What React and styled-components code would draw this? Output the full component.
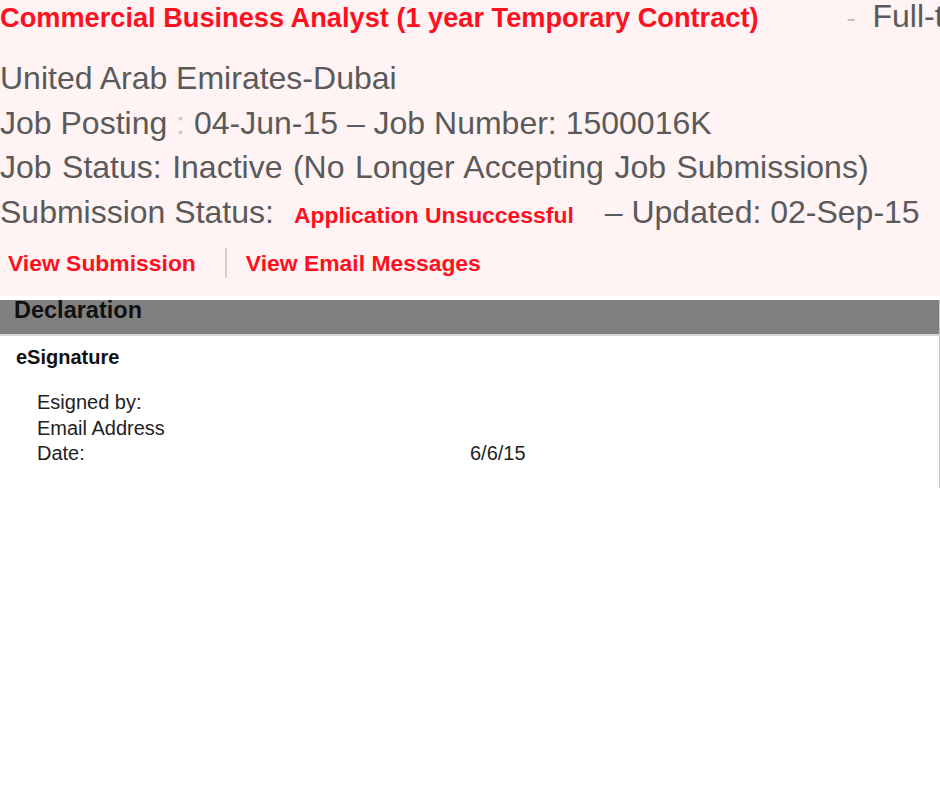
import React from "react";
import styled, { createGlobalStyle } from "styled-components";

const Global = createGlobalStyle`
  html, body { margin: 0; padding: 0; background: #fff; }
  body { font-family: "Liberation Sans", Arial, sans-serif; overflow-x: hidden; }
`;

const RED = "#ff1020";
const GRAY = "#5a5a5a";

const Header = styled.section`
  background: #fff3f4;
  padding: 0 0 18px 0;
  overflow: hidden;
`;

const TitleRow = styled.div`
  display: flex;
  align-items: baseline;
  white-space: nowrap;
  & > * { flex-shrink: 0; line-height: 1; }
`;

const Title = styled.span`
  color: ${RED};
  font-weight: 700;
  font-size: 27.2px;
`;

const Dash = styled.span`
  color: #c2c2c2;
  font-size: 27px;
  margin-left: 88px;
`;

const JobType = styled.span`
  color: ${GRAY};
  font-size: 32px;
  margin-left: 17px;
`;

const InfoList = styled.div`
  margin-top: 24px;
`;

const InfoLine = styled.div`
  color: ${GRAY};
  font-size: 32px;
  line-height: 44.6px;
  white-space: nowrap;
  word-spacing: ${(p) => p.$wordSpacing || "0px"};
`;

const Muted = styled.span`
  color: #c8c8c8;
`;

const Status = styled.span`
  color: ${RED};
  font-weight: 700;
  font-size: 22.9px;
  line-height: 1;
  margin: 0 31px 0 20px;
`;

const LinkRow = styled.div`
  display: flex;
  align-items: center;
  height: 30px;
  margin-top: 13.5px;
  padding-left: 8px;
`;

const Link = styled.a`
  color: ${RED};
  font-weight: 700;
  font-size: 22.9px;
  line-height: 30px;
  text-decoration: none;
  white-space: nowrap;
`;

const Separator = styled.span`
  width: 2px;
  height: 30px;
  background: #d4d0d4;
  margin: 0 19px 0 29px;
`;

const Panel = styled.section`
  margin-top: 4px;
  border-right: 1px solid #c8c8c8;
  box-sizing: border-box;
  width: 100%;
  padding-bottom: 21px;
`;

const PanelBar = styled.div`
  height: 34px;
  background: #808080;
  border-bottom: 2px solid #d6d6d6;
  padding: 0 14px;
  font-size: 23.5px;
  font-weight: 700;
  line-height: 20px;
  color: #111;
`;

const SubHeading = styled.div`
  margin: 10.5px 0 0 16px;
  font-size: 20px;
  font-weight: 700;
  line-height: 23px;
  color: #111;
`;

const Fields = styled.div`
  display: grid;
  grid-template-columns: 433px 1fr;
  margin: 21px 0 0 37px;
  font-size: 20px;
  line-height: 25.5px;
  color: #1e1e1e;
`;

const Cell = styled.div`
  white-space: nowrap;
`;

export default function App() {
  return (
    <>
      <Global />
      <Header>
        <TitleRow>
          <Title>Commercial Business Analyst (1 year Temporary Contract)</Title>
          <Dash>-</Dash>
          <JobType>Full-time</JobType>
        </TitleRow>
        <InfoList>
          <InfoLine>United Arab Emirates-Dubai</InfoLine>
          <InfoLine>
            Job Posting <Muted>:</Muted> 04-Jun-15 – Job Number: 1500016K
          </InfoLine>
          <InfoLine $wordSpacing="1.6px">
            Job Status: Inactive (No Longer Accepting Job Submissions)
          </InfoLine>
          <InfoLine>
            Submission Status:<Status>Application Unsuccessful</Status>– Updated: 02-Sep-15
          </InfoLine>
        </InfoList>
        <LinkRow>
          <Link href="#">View Submission</Link>
          <Separator />
          <Link href="#">View Email Messages</Link>
        </LinkRow>
      </Header>
      <Panel>
        <PanelBar>Declaration</PanelBar>
        <SubHeading>eSignature</SubHeading>
        <Fields>
          <Cell>Esigned by:</Cell>
          <Cell></Cell>
          <Cell>Email Address</Cell>
          <Cell></Cell>
          <Cell>Date:</Cell>
          <Cell>6/6/15</Cell>
        </Fields>
      </Panel>
    </>
  );
}
